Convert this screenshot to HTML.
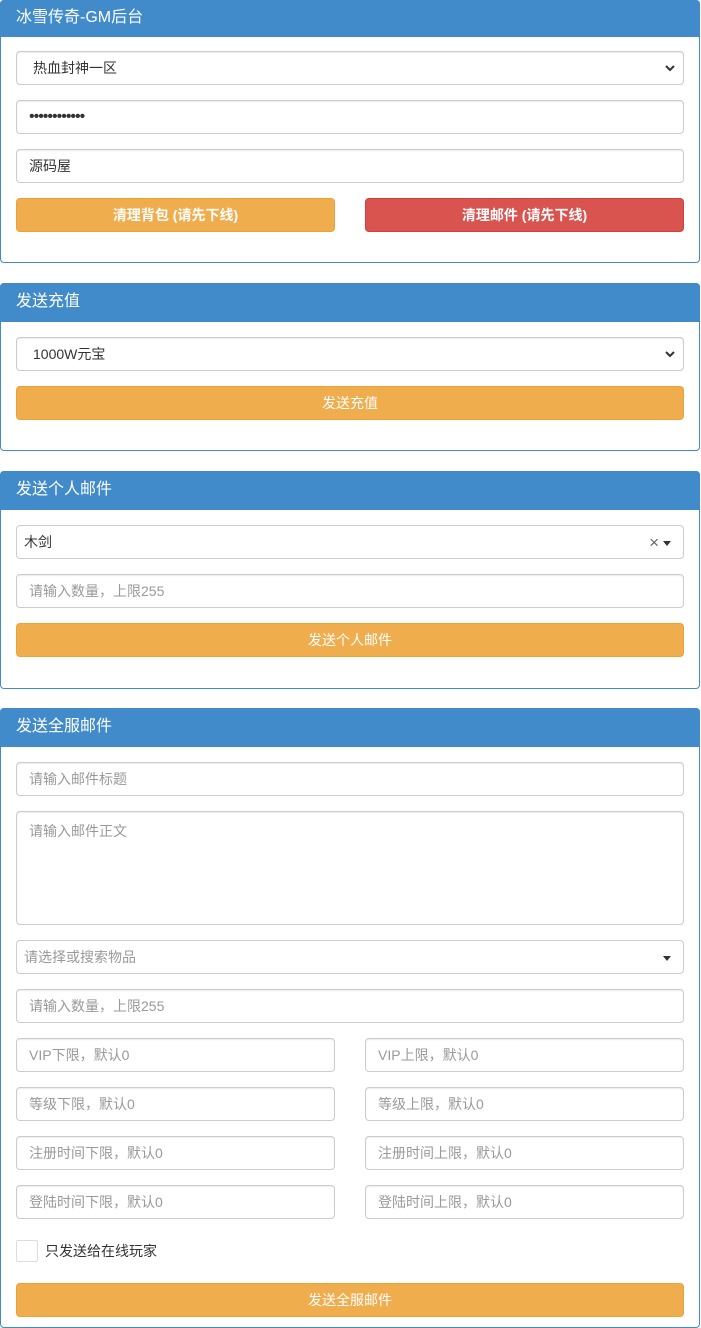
<!DOCTYPE html>
<html><head><meta charset="utf-8"><style>
*{box-sizing:border-box;margin:0;padding:0}
body{width:701px;height:1300px;overflow:hidden;background:#fff;font-family:"Liberation Sans","Noto Sans CJK SC",sans-serif;font-size:14px;color:#333;position:relative}
.p{position:absolute;left:0;width:700px;border:1px solid #428bca;border-radius:4px;background:#fff}
.h{position:absolute;left:-1px;right:-1px;top:-1px;background:#428bca;color:#fff;font-size:16px;padding-left:16px;border-radius:4px 4px 0 0}
.i{position:absolute;height:34px;border:1px solid #ccc;border-radius:4px;background:#fff;padding-left:12px;line-height:32px;font-size:14px;box-shadow:inset 0 1px 1px rgba(0,0,0,.075)}
.ph{color:#999}
.b{position:absolute;height:34px;border-radius:4px;color:#fff;text-align:center;line-height:32px;font-size:14px;background:#f0ad4e;border:1px solid #eea236}
.r{background:#d9534f;border-color:#d43f3a}
.car{position:absolute;right:12px;top:15px;width:0;height:0;border-left:4px solid transparent;border-right:4px solid transparent;border-top:5px solid #333}
</style></head><body>

<div class="p" style="top:0;height:263px">
<div class="h" style="height:37px;line-height:35px">冰雪传奇-GM后台</div>
</div>
<div class="i" style="left:16px;top:51px;width:668px;padding-left:16px">热血封神一区<svg style="position:absolute;right:8px;top:12px" width="10" height="8" viewBox="0 0 10 8"><path d="M1 2l4 4 4-4" stroke="#333" stroke-width="2" fill="none"/></svg></div>
<div class="i" style="left:16px;top:100px;width:668px;letter-spacing:-1px;font-size:16px">••••••••••••</div>
<div class="i" style="left:16px;top:149px;width:668px">源码屋</div>
<div class="b" style="left:16px;top:198px;width:319px;font-weight:bold">清理背包 (请先下线)</div>
<div class="b r" style="left:365px;top:198px;width:319px;font-weight:bold">清理邮件 (请先下线)</div>

<div class="p" style="top:283px;height:168px">
<div class="h" style="height:39px;line-height:37px">发送充值</div>
</div>
<div class="i" style="left:16px;top:337px;width:668px;padding-left:16px">1000W元宝<svg style="position:absolute;right:8px;top:12px" width="10" height="8" viewBox="0 0 10 8"><path d="M1 2l4 4 4-4" stroke="#333" stroke-width="2" fill="none"/></svg></div>
<div class="b" style="left:16px;top:386px;width:668px">发送充值</div>

<div class="p" style="top:471px;height:218px">
<div class="h" style="height:39px;line-height:37px">发送个人邮件</div>
</div>
<div class="i" style="left:16px;top:525px;width:668px;padding-left:7px;box-shadow:none">木剑<span style="position:absolute;right:24px;top:1px;color:#666;font-size:17px">×</span><div class="car"></div></div>
<div class="i ph" style="left:16px;top:574px;width:668px">请输入数量，上限255</div>
<div class="b" style="left:16px;top:623px;width:668px">发送个人邮件</div>

<div class="p" style="top:708px;height:620px">
<div class="h" style="height:39px;line-height:37px">发送全服邮件</div>
</div>
<div class="i ph" style="left:16px;top:762px;width:668px">请输入邮件标题</div>
<div class="i ph" style="left:16px;top:811px;width:668px;height:114px;line-height:normal;padding-top:9px">请输入邮件正文</div>
<div class="i ph" style="left:16px;top:940px;width:668px;padding-left:7px;box-shadow:none">请选择或搜索物品<div class="car"></div></div>
<div class="i ph" style="left:16px;top:989px;width:668px">请输入数量，上限255</div>
<div class="i ph" style="left:16px;top:1038px;width:319px">VIP下限，默认0</div>
<div class="i ph" style="left:365px;top:1038px;width:319px">VIP上限，默认0</div>
<div class="i ph" style="left:16px;top:1087px;width:319px">等级下限，默认0</div>
<div class="i ph" style="left:365px;top:1087px;width:319px">等级上限，默认0</div>
<div class="i ph" style="left:16px;top:1136px;width:319px">注册时间下限，默认0</div>
<div class="i ph" style="left:365px;top:1136px;width:319px">注册时间上限，默认0</div>
<div class="i ph" style="left:16px;top:1185px;width:319px">登陆时间下限，默认0</div>
<div class="i ph" style="left:365px;top:1185px;width:319px">登陆时间上限，默认0</div>
<div style="position:absolute;left:16px;top:1240px;width:22px;height:22px;border:1px solid #ddd;border-radius:2px"></div>
<div style="position:absolute;left:45px;top:1241px;line-height:20px">只发送给在线玩家</div>
<div class="b" style="left:16px;top:1283px;width:668px">发送全服邮件</div>
</body></html>
